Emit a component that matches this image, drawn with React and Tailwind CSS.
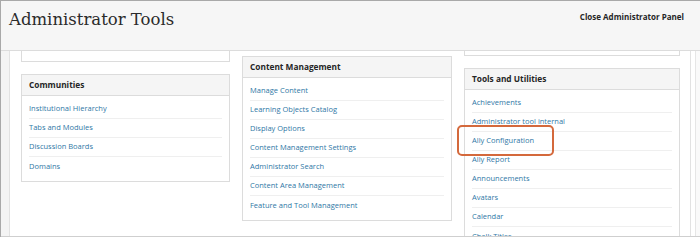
import React from 'react';

const sans = { fontFamily: '"Open Sans", "Liberation Sans", sans-serif' };

const Panel = ({ title, items, className = '' }) => (
  <div className={`shrink-0 border border-[#dcdcdc] bg-white ${className}`}>
    <div className="h-[21px] flex items-center px-[7px] bg-[#f5f5f5] border-b border-[#dcdcdc] text-[8.3px] font-bold text-[#262626]">
      {title}
    </div>
    <ul className="px-[7px] pt-[4px] pb-[5px]">
      {items.map((item, i) => (
        <li
          key={item}
          className={`h-[19px] flex items-center text-[7.5px] text-[#2f78a6] ${i < items.length - 1 ? 'border-b border-[#efefef]' : ''}`}
        >
          {item}
        </li>
      ))}
    </ul>
  </div>
);

const Stub = ({ h }) => (
  <div className="shrink-0 border border-t-0 border-[#dcdcdc] bg-white" style={{ height: h }} />
);

export default function App() {
  return (
    <div
      className="relative w-[700px] h-[237px] overflow-hidden bg-white border-l border-t border-[#a9a9a9]"
      style={sans}
    >
      <div className="h-[50px] bg-[#f6f6f6] border-b border-[#dcdcdc] flex justify-between">
        <h1
          className="pl-[8px] pt-[8px] text-[16.5px] leading-[22px] text-[#2b2b2b]"
          style={{ fontFamily: '"DejaVu Serif", "Liberation Serif", serif' }}
        >
          Administrator Tools
        </h1>
        <div className="pr-[16px] pt-[10px] text-[8px] leading-[11px] font-bold text-[#262626]">
          Close Administrator Panel
        </div>
      </div>

      <div className="flex h-[186px] border-b border-[#cfcfcf]">
        <div className="w-[9px] bg-[#f4f4f4] border-r border-[#e2e2e2]" />
        <div className="flex-1 flex gap-[12px] pl-[11px] overflow-hidden">
          <div className="w-[209px] flex flex-col gap-[12px]">
            <Stub h={11} />
            <Panel
              title="Communities"
              items={['Institutional Hierarchy', 'Tabs and Modules', 'Discussion Boards', 'Domains']}
            />
          </div>
          <div className="w-[210px] pt-[5px]">
            <Panel
              title="Content Management"
              items={[
                'Manage Content',
                'Learning Objects Catalog',
                'Display Options',
                'Content Management Settings',
                'Administrator Search',
                'Content Area Management',
                'Feature and Tool Management',
              ]}
            />
          </div>
          <div className="w-[216px] flex flex-col gap-[12px]">
            <Stub h={5} />
            <Panel
              title="Tools and Utilities"
              items={[
                'Achievements',
                'Administrator tool internal',
                'Ally Configuration',
                'Ally Report',
                'Announcements',
                'Avatars',
                'Calendar',
                'Chalk Titles',
              ]}
            />
          </div>
        </div>
        <div className="w-[10px] flex border-l border-[#e2e2e2]">
          <div className="w-[5px]" />
          <div className="w-[5px] border-l border-[#e6e6e6] bg-[#fafafa]" />
        </div>
      </div>

      <div className="absolute left-[456px] top-[124px] w-[97px] h-[31px] rounded-[5px] border-2 border-[#d4693c]" />
    </div>
  );
}
